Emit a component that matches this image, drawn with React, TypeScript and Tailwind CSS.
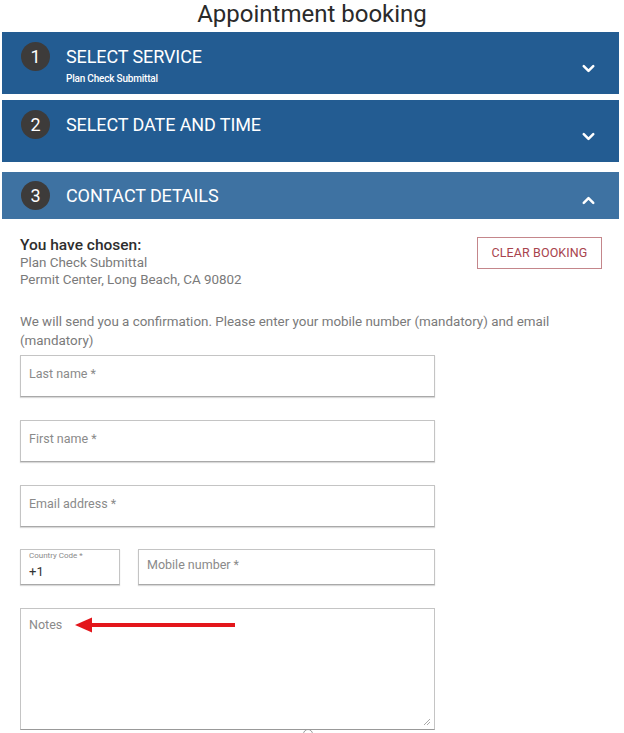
import { ChevronDown, ChevronUp } from 'lucide-react';

type Step = { n: number; title: string; sub?: string; open?: boolean };

const steps: Step[] = [
  { n: 1, title: 'SELECT SERVICE', sub: 'Plan Check Submittal' },
  { n: 2, title: 'SELECT DATE AND TIME' },
  { n: 3, title: 'CONTACT DETAILS', open: true },
];

function StepBar({ step }: { step: Step }) {
  const bg = step.open ? 'bg-[#3e72a2] h-[47px] pt-[9px]' : 'bg-[#235c92] h-[62px] pt-[10px]';
  return (
    <div className={`flex items-start pl-[19px] pr-[21px] ${bg}`}>
      <div className="w-[29px] h-[29px] rounded-full bg-[#3d3b3a] flex items-center justify-center text-white text-[18px] shrink-0">
        {step.n}
      </div>
      <div className="ml-[16px] flex-1">
        <div className="text-white text-[18px] leading-[29px] tracking-[-0.1px]">{step.title}</div>
        {step.sub && (
          <div className="text-white text-[10px] font-medium leading-[12px] mt-[2px] tracking-[-0.2px]">
            {step.sub}
          </div>
        )}
      </div>
      <div className="self-center">
        {step.open ? (
          <ChevronUp size={19} strokeWidth={3.2} className="text-white" />
        ) : (
          <ChevronDown size={19} strokeWidth={3.2} className="text-white" />
        )}
      </div>
    </div>
  );
}

function Field({ label, className }: { label: string; className: string }) {
  return (
    <div
      className={`border border-[#c4c4c4] border-b-[#a9a9a9] shadow-[0_1px_1px_rgba(0,0,0,0.15)] px-[8px] ${className}`}
    >
      <span className="text-[12.5px] text-[#8a8a8a]">{label}</span>
    </div>
  );
}

export default function App() {
  return (
    <div className="w-[624px] h-[733px] overflow-hidden bg-white font-['Roboto',sans-serif]">
      <h1 className="text-center text-[24px] leading-[28px] text-[#2a2a2a] h-[32px]">
        Appointment booking
      </h1>

      <div className="mx-[2px] w-[617px]">
        <StepBar step={steps[0]} />
        <div className="h-[6px]" />
        <div className="h-[63px]">
          <StepBar step={steps[1]} />
        </div>
        <div className="h-[9px]" />
        <StepBar step={steps[2]} />
      </div>

      <div className="pl-[20px] pr-[22px] pt-[18px]">
        <div className="flex justify-between items-start">
          <div>
            <div className="text-[15.5px] font-medium text-[#2e2e2e] leading-[17px]">You have chosen:</div>
            <div className="text-[13.4px] text-[#7a7a7a] leading-[17px]">Plan Check Submittal</div>
            <div className="text-[13.4px] text-[#7a7a7a] leading-[17px]">Permit Center, Long Beach, CA 90802</div>
          </div>
          <button className="w-[125px] h-[32px] border border-[#c4868b] text-[#a8434d] text-[12.5px] tracking-[0.1px]">
            CLEAR BOOKING
          </button>
        </div>

        <p className="mt-[24px] text-[13.4px] leading-[19px] text-[#7a7a7a]">
          We will send you a confirmation. Please enter your mobile number (mandatory) and email (mandatory)
        </p>

        <div className="mt-[5px] flex flex-col">
          <Field label="Last name *" className="w-[415px] h-[42px] pt-[5px]" />
          <Field label="First name *" className="w-[415px] h-[42px] mt-[23px] pt-[5px]" />
          <Field label="Email address *" className="w-[415px] h-[42px] mt-[23px] pt-[5px]" />

          <div className="flex gap-[18px] mt-[22px]">
            <div className="w-[100px] h-[36px] border border-[#c4c4c4] border-b-[#a9a9a9] shadow-[0_1px_1px_rgba(0,0,0,0.15)] px-[8px] pt-[1px]">
              <div className="text-[8px] leading-[10px] text-[#8a8a8a]">Country Code *</div>
              <div className="text-[13px] leading-[22px] text-[#333]">+1</div>
            </div>
            <Field label="Mobile number *" className="w-[297px] h-[36px] pt-[2px]" />
          </div>

          <div className="relative w-[415px] h-[122px] mt-[23px] border border-[#c4c4c4] border-b-[#999] px-[8px] pt-[7px]">
            <div className="flex items-center">
              <span className="text-[12.5px] text-[#8a8a8a]">Notes</span>
              <svg width="162" height="16" viewBox="0 0 162 16" className="ml-[13px]">
                <polygon points="0,8 17,0.5 17,15.5" fill="#e3161b" />
                <rect x="15" y="6" width="145" height="4" fill="#e3161b" />
              </svg>
            </div>
            <svg width="8" height="8" viewBox="0 0 8 8" className="absolute right-[3px] bottom-[3px]">
              <line x1="1" y1="7" x2="7" y2="1" stroke="#aaa" strokeWidth="1" />
              <line x1="4" y1="7" x2="7" y2="4" stroke="#aaa" strokeWidth="1" />
            </svg>
          </div>
          <div className="ml-[283px] mt-[-1px] w-[10px] h-[10px] rounded-full border border-[#999]" />
        </div>
      </div>
    </div>
  );
}
